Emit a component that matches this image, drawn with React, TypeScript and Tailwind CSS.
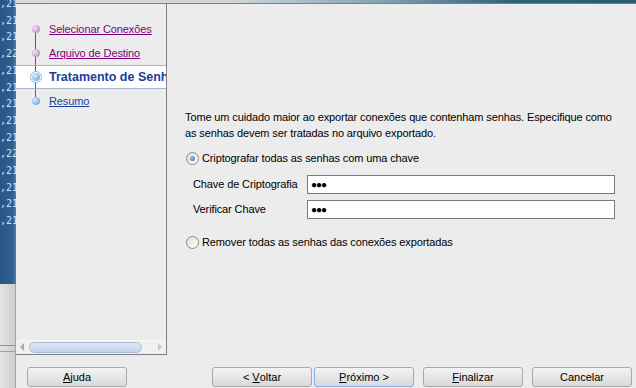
const stripRows = [",21", ",21", ",21", ",22", ",21", ",21", ",21", ",21", ",21", ",22", ",21", ",21", ",21", ",21"];

const steps = [
  { label: "Selecionar Conexões", state: "visited" },
  { label: "Arquivo de Destino", state: "visited" },
  { label: "Tratamento de Senhas", state: "current" },
  { label: "Resumo", state: "next" },
];

function Bullet({ state, first, last, prevVisited }: { state: string; first: boolean; last: boolean; prevVisited: boolean }) {
  const up = state === "visited" || prevVisited ? "bg-[#8a3e98]" : "bg-[#3a6fc4]";
  const down = state === "visited" ? "bg-[#8a3e98]" : "bg-[#3a6fc4]";
  return (
    <div className="relative flex h-full w-[13px] items-center justify-center">
      {!first && <div className={`absolute left-[6px] top-0 h-1/2 w-px ${up}`} />}
      {!last && <div className={`absolute left-[6px] bottom-0 h-1/2 w-px ${down}`} />}
      {state === "current" ? (
        <div className="relative flex h-[12px] w-[12px] items-center justify-center rounded-full border border-[#8fb3e0] bg-white">
          <div className="h-[8px] w-[8px] rounded-full bg-[radial-gradient(circle_at_35%_35%,#d6e8fb,#5e98e0)]" />
        </div>
      ) : state === "visited" ? (
        <div className="relative h-[8px] w-[8px] rounded-full bg-[radial-gradient(circle_at_35%_35%,#f1e3f3,#a97ab5)]" />
      ) : (
        <div className="relative h-[8px] w-[8px] rounded-full bg-[radial-gradient(circle_at_35%_35%,#dbeafc,#5b93dc)]" />
      )}
    </div>
  );
}

function Radio({ checked }: { checked?: boolean }) {
  return (
    <div className="flex h-[13px] w-[13px] items-center justify-center rounded-full border border-[#8b8b8b] bg-[linear-gradient(135deg,#dcdcdc,#ffffff)]">
      {checked && <div className="h-[5px] w-[5px] rounded-full bg-[radial-gradient(circle_at_35%_35%,#9cc4f0,#2c62b8)]" />}
    </div>
  );
}

function Btn({ children, focused }: { children: React.ReactNode; focused?: boolean }) {
  return (
    <div
      className={`flex h-[20px] w-[100px] items-center justify-center rounded-[3px] border bg-[linear-gradient(#f3f3f3,#e6e6e6_50%,#dadada)] text-[11px] text-black ${
        focused ? "border-[#7fb1e6]" : "border-[#a9a9a9]"
      }`}
    >
      {children}
    </div>
  );
}

export default function App() {
  return (
    <div className="flex h-[388px] w-[636px] overflow-hidden bg-[#ececec] font-['Liberation_Sans',Arial,sans-serif]">
      <div className="flex w-[16px] shrink-0 flex-col">
        <div className="h-[284px] overflow-hidden bg-[linear-gradient(90deg,#2a5584,#2f5f90_80%,#5a7fa6)] font-['DejaVu_Sans_Mono',monospace] text-[10px] leading-[16.7px] text-[#cfe0f2]">
          <div className="-mt-[4px] whitespace-pre">
            {stripRows.map((r, i) => (
              <div key={i}>{r}</div>
            ))}
          </div>
        </div>
        <div className="flex flex-1 flex-col border-r border-[#a3a3a3] bg-[linear-gradient(90deg,#e4e4e4,#cfcfcf)]">
          <div className="h-[62px] border-b border-[#909090]" />
          <div className="h-[6px] border-b border-[#a0a0a0]" />
        </div>
      </div>

      <div className="flex flex-1 flex-col">
        <div className="h-[3px] bg-[linear-gradient(90deg,#d6dadd,#cfd6da_35%,#7fa0b0_60%,#2f6079_80%,#2a5a74)]" />
        <div className="flex h-[352px] border-t border-[#7f7f7f]">
          <div className="flex w-[151px] shrink-0 flex-col border-b border-r border-[#808080]">
            <div className="flex-1 pt-[13px]">
              {steps.map((s, i) => (
                <div
                  key={s.label}
                  className={`flex h-[24px] items-center overflow-hidden whitespace-nowrap ${
                    s.state === "current" ? "border-y border-[#a6b7cc] bg-white" : ""
                  }`}
                >
                  <div className="ml-[13px] h-full">
                    <Bullet state={s.state} first={i === 0} last={i === steps.length - 1} prevVisited={i > 0 && steps[i - 1].state === "visited"} />
                  </div>
                  <span
                    className={`ml-[7px] ${
                      s.state === "current"
                        ? "text-[12.5px] font-bold text-[#1b3f97]"
                        : s.state === "visited"
                        ? "text-[11px] tracking-[-0.1px] text-[#800080] underline"
                        : "text-[11px] tracking-[-0.1px] text-[#1a3fa0] underline"
                    }`}
                  >
                    {s.label}
                  </span>
                </div>
              ))}
            </div>
            <div className="mb-px flex h-[13px] items-center border-t border-[#f8f8f8] bg-[#f0f0f0] px-[4px]">
              <div className="h-0 w-0 border-y-[4px] border-r-[4px] border-y-transparent border-r-[#a8a8a8]" />
              <div className="ml-[5px] h-[11px] w-[113px] rounded-full border border-[#a8bcd6] bg-[linear-gradient(#dbe7f5,#c4d6ec)]" />
              <div className="flex-1" />
              <div className="h-0 w-0 border-y-[4px] border-l-[4px] border-y-transparent border-l-[#c8c8c8]" />
            </div>
          </div>

          <div className="flex flex-1 flex-col whitespace-nowrap pl-[18px] pr-[21px] pt-[105px] text-[11px] tracking-[-0.12px] text-black">
            <p className="leading-[16px]">
              Tome um cuidado maior ao exportar conexões que contenham senhas. Especifique como
              <br />
              as senhas devem ser tratadas no arquivo exportado.
            </p>
            <div className="mt-[9px] flex h-[16px] items-center gap-[3px] pl-px">
              <Radio checked />
              <span>Criptografar todas as senhas com uma chave</span>
            </div>
            <div className="mt-[9px] flex flex-col gap-[6px] pl-[8px]">
              <div className="flex items-center">
                <span className="w-[114px]">Chave de Criptografia</span>
                <div className="flex h-[19px] flex-1 items-center border border-[#7a7a7a] bg-white pl-[3px] text-[10px] font-bold tracking-[-1px]">
                  ●●●
                </div>
              </div>
              <div className="flex items-center">
                <span className="w-[114px]">Verificar Chave</span>
                <div className="flex h-[19px] flex-1 items-center border border-[#7a7a7a] bg-white pl-[3px] text-[10px] font-bold tracking-[-1px]">
                  ●●●
                </div>
              </div>
            </div>
            <div className="mt-[15px] flex h-[16px] items-center gap-[3px] pl-px">
              <Radio />
              <span>Remover todas as senhas das conexões exportadas</span>
            </div>
          </div>
        </div>
        <div className="flex flex-1 items-start pt-[12px] pl-[11px] pr-[4px]">
          <Btn>
            <span className="underline">A</span>juda
          </Btn>
          <div className="flex-1" />
          <div className="flex">
            <Btn>
              &lt; <span className="ml-[3px] underline">V</span>oltar
            </Btn>
            <div className="ml-[2px]">
              <Btn focused>
                <span className="underline">P</span>róximo &gt;
              </Btn>
            </div>
            <div className="ml-[9px]">
              <Btn>
                <span className="underline">F</span>inalizar
              </Btn>
            </div>
            <div className="ml-[9px]">
              <Btn>Cancelar</Btn>
            </div>
          </div>
        </div>
      </div>
    </div>
  );
}
